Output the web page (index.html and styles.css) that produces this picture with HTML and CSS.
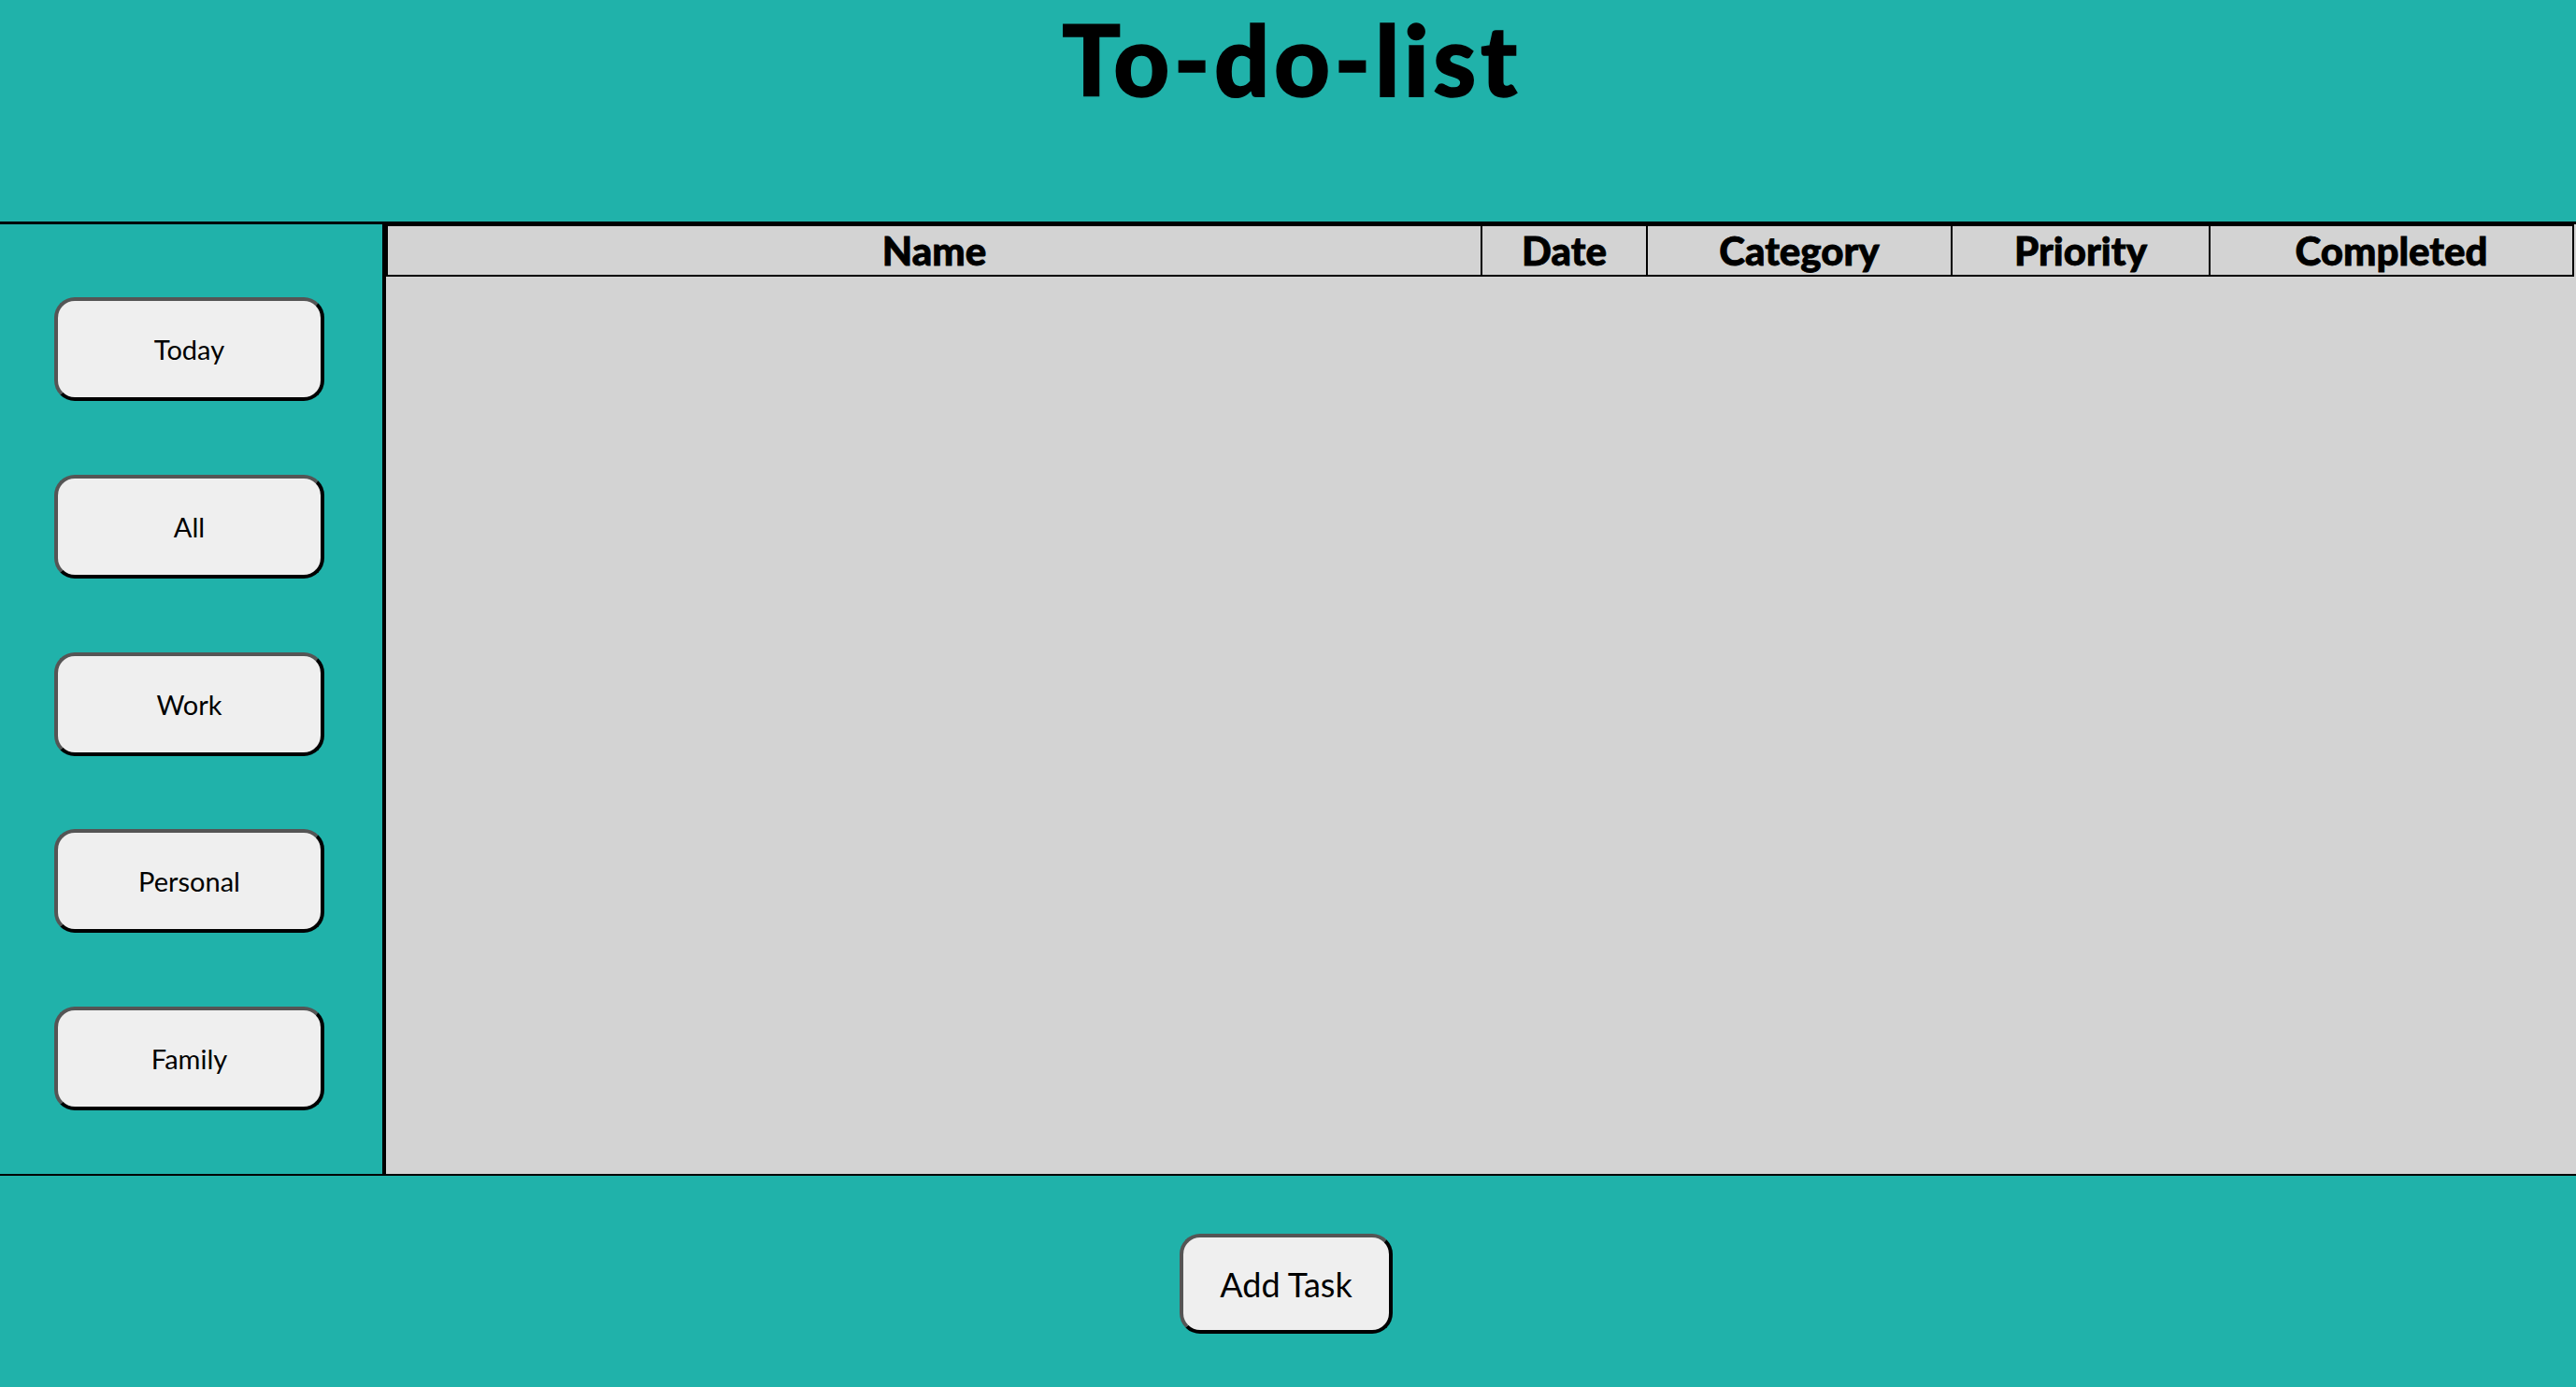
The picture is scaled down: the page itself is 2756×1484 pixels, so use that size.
FILE: index.html
```html
<!DOCTYPE html>
<html lang="en">
<head>
<meta charset="utf-8">
<title>To-do-list</title>
<link rel="stylesheet" href="styles.css">
</head>
<body>
<header class="top">
  <h1 class="title">To-do-list</h1>
</header>
<main class="main">
  <nav class="sidebar">
    <button class="cat-btn">Today</button>
    <button class="cat-btn">All</button>
    <button class="cat-btn">Work</button>
    <button class="cat-btn">Personal</button>
    <button class="cat-btn">Family</button>
  </nav>
  <section class="list">
    <table class="tasks">
      <colgroup>
        <col class="c-name">
        <col class="c-date">
        <col class="c-cat">
        <col class="c-pri">
        <col class="c-done">
      </colgroup>
      <thead>
        <tr>
          <th>Name</th>
          <th>Date</th>
          <th>Category</th>
          <th>Priority</th>
          <th>Completed</th>
        </tr>
      </thead>
      <tbody></tbody>
    </table>
  </section>
</main>
<footer class="bottom">
  <button class="add-btn">Add Task</button>
</footer>
</body>
</html>
```

FILE: styles.css
```css
html, body {
  margin: 0;
  padding: 0;
}
body {
  background: #20b2aa;
  font-family: Lato, "Noto Sans", sans-serif;
  color: #000;
  width: 2756px;
  height: 1484px;
  overflow: hidden;
}
.top {
  height: 237px;
  box-sizing: border-box;
  display: flex;
  justify-content: center;
  padding-top: 8px;
  padding-left: 8px;
}
.title {
  margin: 0;
  font-size: 104px;
  font-weight: 900;
  line-height: 110px;
  letter-spacing: 4.5px;
  -webkit-text-stroke: 1.5px #000;
}
.main {
  display: flex;
  height: 1021px;
  box-sizing: border-box;
  border-top: 3px solid #000;
  border-bottom: 2px solid #000;
}
.sidebar {
  width: 405px;
  flex: none;
  border-right: 4px solid #000;
  display: flex;
  flex-direction: column;
  align-items: center;
  gap: 78.75px;
  padding-top: 78px;
  padding-right: 4px;
  box-sizing: content-box;
}
.cat-btn, .add-btn {
  font-family: Lato, "Noto Sans", sans-serif;
  background: #efefef;
  color: #000;
  border: 4px solid;
  border-color: #555 #000 #000 #555;
  border-radius: 22px;
  padding: 0;
  box-sizing: border-box;
  cursor: pointer;
}
.cat-btn {
  width: 289px;
  height: 111px;
  font-size: 29px;
}
.list {
  flex: 1;
  background: #d3d3d3;
}
.tasks {
  border-collapse: collapse;
  table-layout: fixed;
  width: 2341px;
}
.c-name { width: 1171px; }
.c-date { width: 177px; }
.c-cat { width: 326px; }
.c-pri { width: 276px; }
.c-done { width: 389px; }
.tasks th {
  border: 2px solid #000;
  padding: 0;
  height: 52px;
  font-size: 42px;
  font-weight: 900;
  line-height: 52px;
  text-align: center;
  -webkit-text-stroke: 0.8px #000;
}
.bottom {
  display: flex;
  justify-content: center;
  padding-top: 62px;
  padding-right: 4px;
}
.add-btn {
  width: 228px;
  height: 107px;
  font-size: 36px;
}
```
